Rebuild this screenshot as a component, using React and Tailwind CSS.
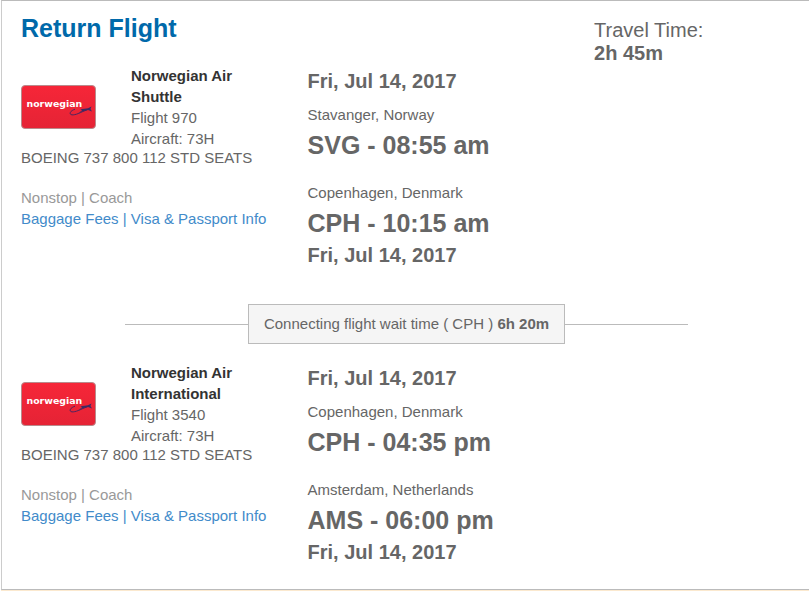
const segments = [
  {
    airline: "Norwegian Air Shuttle",
    flight: "970",
    from: { city: "Stavanger, Norway", code: "SVG", time: "08:55 am" },
    to: { city: "Copenhagen, Denmark", code: "CPH", time: "10:15 am" },
  },
  {
    airline: "Norwegian Air International",
    flight: "3540",
    from: { city: "Copenhagen, Denmark", code: "CPH", time: "04:35 pm" },
    to: { city: "Amsterdam, Netherlands", code: "AMS", time: "06:00 pm" },
  },
];

const date = "Fri, Jul 14, 2017";

function AirlineLogo() {
  return (
    <svg
      className="block shrink-0"
      width="75"
      height="44"
      viewBox="0 0 75 44"
      role="img"
      aria-label="Norwegian"
    >
      <defs>
        <linearGradient id="logo-red" x1="0" y1="0" x2="0" y2="1">
          <stop offset="0" stopColor="#f62638" />
          <stop offset="1" stopColor="#e52335" />
        </linearGradient>
      </defs>
      <rect
        x="0.5"
        y="0.5"
        width="74"
        height="43"
        rx="3.5"
        fill="url(#logo-red)"
        stroke="#b98a8c"
      />
      <text
        x="5.5"
        y="22"
        fill="#fff"
        fontFamily="'DejaVu Sans', sans-serif"
        fontWeight="700"
        fontSize="9.4"
      >
        norwegian
      </text>
      {/* plane with its trail */}
      <path
        d="M54 24.2C50.5 25.4 48.6 27.4 49.3 29C50.6 31 56 29.4 61 26.9L67 24.4"
        fill="none"
        stroke="#4a2560"
        strokeWidth="1"
      />
      <path
        d="M59.5 24.6C62 23.6 65 23.6 67 23.2L70.5 21.5L69.5 24L71 26.6L67 25L61.5 26.2L57 28.2L61 25.4Z"
        fill="#3b2b63"
      />
    </svg>
  );
}

function Stop({ city, code, time }) {
  return (
    <div>
      <p className="text-[15px] leading-5">{city}</p>
      <p className="text-[25px] font-bold leading-10">
        {code} - {time}
      </p>
    </div>
  );
}

function Segment({ segment }) {
  return (
    <div className="grid grid-cols-[4fr_4fr_3fr]">
      <div className="text-[15px] leading-[21px]">
        <div className="flex h-20 items-center gap-[35px]">
          <AirlineLogo />
          <div className="w-32">
            <p className="font-bold text-[#333]">{segment.airline}</p>
            <p>Flight {segment.flight}</p>
            <p>Aircraft: 73H</p>
          </div>
        </div>
        <p className="mb-[19px]">BOEING 737 800 112 STD SEATS</p>
        <p className="text-[#999]">Nonstop | Coach</p>
        <p className="text-[#428bca]">
          <a href="#baggage">Baggage Fees</a> | <a href="#visa">Visa &amp; Passport Info</a>
        </p>
      </div>
      <div>
        <p className="mb-2.5 text-xl font-bold leading-7">{date}</p>
        <Stop {...segment.from} />
        <div className="mt-[18px]">
          <Stop {...segment.to} />
        </div>
        <p className="text-xl font-bold leading-6">{date}</p>
      </div>
    </div>
  );
}

function Layover({ airport, wait }) {
  return (
    <div className="mx-auto flex w-7/10 items-center">
      <div className="h-px flex-1 bg-[#bbb]" />
      <p className="border border-[#bbb] bg-[#f5f5f5] px-[15px] text-[15px] leading-[38px]">
        Connecting flight wait time ( {airport} ) <b>{wait}</b>
      </p>
      <div className="h-px flex-1 bg-[#bbb]" />
    </div>
  );
}

function App() {
  return (
    <div className="bg-white pl-px font-['Liberation_Sans',Arial,sans-serif] text-[#666]">
      <section className="border-y border-l border-[#bbb] border-l-[#ccc] pb-[25px]">
        <div className="grid grid-cols-[4fr_4fr_3fr] pl-[19px] pt-[13px]">
          <h2 className="col-span-2 text-[25px] font-bold leading-7 text-[#0069aa]">
            Return Flight
          </h2>
          <div className="mb-0.5 pt-[5px] text-xl leading-[23px]">
            <p>Travel Time:</p>
            <p className="font-bold">2h 45m</p>
          </div>
        </div>
        <div className="pl-[19px]">
          <Segment segment={segments[0]} />
        </div>
        <div className="mb-5 pl-0.5 pt-[37px]">
          <Layover airport="CPH" wait="6h 20m" />
        </div>
        <div className="pl-[19px]">
          <Segment segment={segments[1]} />
        </div>
      </section>
      <div className="h-px bg-[#fbe9cf]" />
    </div>
  );
}

export default App;
